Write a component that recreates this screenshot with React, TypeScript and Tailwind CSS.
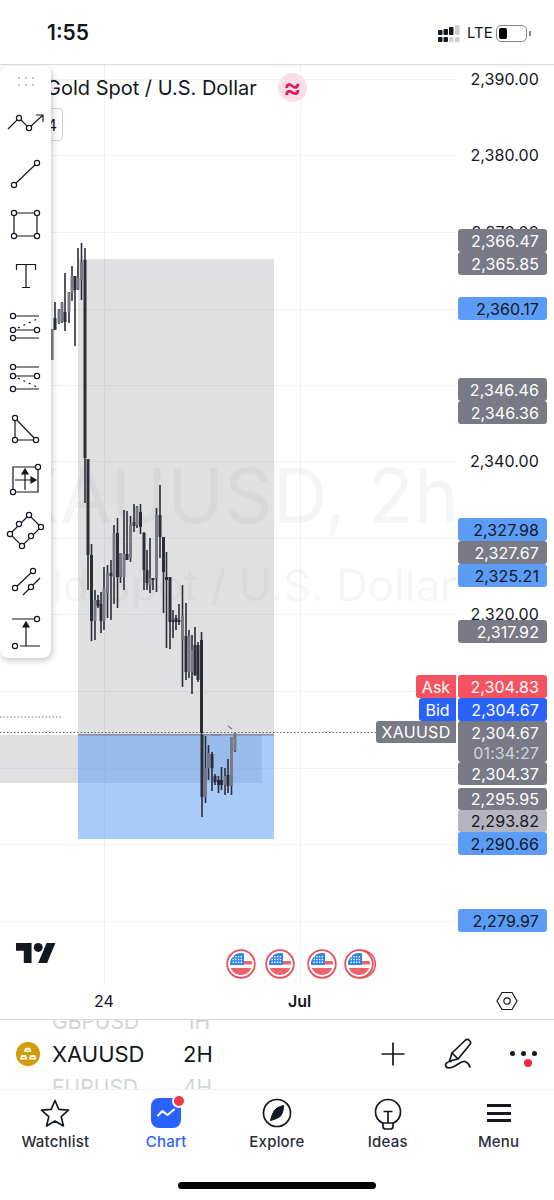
import React from "react";

const DARK = "#2a2e39";
const GRAY = "#787b86";

// x, wickTop, wickBottom, bodyTop, bodyBottom, colour
const candles: [number, number, number, number, number, string][] = [
  [52, 329, 360, 329, 360, GRAY], [55, 302, 330, 318, 330, DARK], [59, 309, 324, 310, 323, GRAY],
  [62, 302, 323, 303, 322, GRAY], [65, 273, 331, 312, 322, DARK], [69, 292, 323, 293, 312, GRAY],
  [72, 266, 301, 276, 293, GRAY], [75, 277, 346, 276, 290, DARK], [78, 248, 290, 278, 289, GRAY],
  [81.5, 243, 300, 262, 280, GRAY], [85, 248, 503, 260, 458, DARK], [88, 459, 590, 459, 555, DARK],
  [91.5, 544, 641, 555, 621, DARK], [95, 590, 640, 600, 621, GRAY], [98, 595, 608, 600, 606, DARK],
  [101, 592, 633, 604, 621, DARK], [104, 567, 630, 588, 621, GRAY], [107.5, 565, 618, 573, 593, GRAY],
  [111, 560, 620, 573, 576, DARK], [114, 525, 604, 533, 577, GRAY], [117.5, 518, 608, 533, 577, DARK],
  [120.5, 553, 583, 553, 577, GRAY], [124, 510, 590, 554, 577, GRAY], [127, 511, 558, 554, 560, DARK],
  [130.5, 516, 562, 525, 558, GRAY], [134, 504, 532, 522, 526, DARK], [137, 506, 528, 507, 525, GRAY],
  [140.5, 504, 534, 512, 527, DARK], [144, 532, 590, 533, 570, DARK], [147, 550, 590, 570, 583, DARK],
  [150, 538, 593, 578, 585, GRAY], [153, 578, 590, 578, 580, DARK], [156.5, 508, 592, 515, 578, GRAY],
  [160, 485, 558, 515, 537, DARK], [163.5, 537, 613, 537, 572, DARK], [166.5, 552, 648, 577, 580, DARK],
  [170, 577, 649, 577, 622, DARK], [173, 610, 638, 620, 622, DARK], [176, 615, 630, 618, 622, DARK],
  [179, 604, 625, 620, 622, DARK], [182.5, 585, 687, 616, 640, GRAY], [186, 603, 680, 636, 672, DARK],
  [189, 630, 678, 636, 672, GRAY], [192, 635, 694, 650, 672, GRAY], [195, 627, 676, 645, 675, DARK],
  [198, 642, 682, 645, 680, DARK], [201.5, 632, 735, 640, 733, DARK], [202, 735, 817, 735, 797, DARK],
  [205.5, 736, 803, 768, 797, GRAY], [208.5, 745, 780, 753, 768, GRAY], [212, 752, 791, 754, 768, DARK],
  [215, 774, 785, 776, 782, DARK], [218.5, 776, 793, 780, 785, DARK], [221.5, 767, 790, 780, 785, DARK],
  [225, 768, 795, 776, 785, GRAY], [228, 759, 793, 775, 786, DARK], [231.5, 742, 795, 737, 786, GRAY],
  [235, 733, 752, 733, 751, GRAY],
];

const gridY = [79, 155, 232, 309, 385, 461, 538, 614, 691, 768, 844, 921];

const axis: [string, number][] = [
  ["2,390.00", 79], ["2,380.00", 155], ["2,370.00", 232], ["2,340.00", 461], ["2,320.00", 614],
];

const labels: [string, number, number, string, string][] = [
  ["2,366.47", 229, 23, "bg-[#787b86]", "text-white"],
  ["2,365.85", 252, 23, "bg-[#787b86]", "text-white"],
  ["2,360.17", 297, 23, "bg-[#5b9cf6]", "text-[#131722]"],
  ["2,346.46", 378, 23, "bg-[#787b86]", "text-white"],
  ["2,346.36", 401, 23, "bg-[#787b86]", "text-white"],
  ["2,327.98", 518, 23, "bg-[#5b9cf6]", "text-[#131722]"],
  ["2,327.67", 541, 23, "bg-[#787b86]", "text-white"],
  ["2,325.21", 564, 23, "bg-[#5b9cf6]", "text-[#131722]"],
  ["2,317.92", 620, 23, "bg-[#787b86]", "text-white"],
  ["2,304.83", 675, 23, "bg-[#f7525f]", "text-white"],
  ["2,304.67", 698, 23, "bg-[#2962ff]", "text-white"],
  ["2,304.37", 762, 23, "bg-[#787b86]", "text-white"],
  ["2,295.95", 788, 22, "bg-[#787b86]", "text-white"],
  ["2,293.82", 810, 22, "bg-[#b2b5be]", "text-[#131722]"],
  ["2,290.66", 832, 23, "bg-[#5b9cf6]", "text-[#131722]"],
  ["2,279.97", 909, 23, "bg-[#5b9cf6]", "text-[#131722]"],
];

const I = "#131722";

function Node({ x, y, r = 2.6 }: { x: number; y: number; r?: number }) {
  return <circle cx={x} cy={y} r={r} fill="white" stroke={I} strokeWidth="1.2" />;
}

function Tool({ top, children }: { top: number; children: React.ReactNode }) {
  return (
    <svg width="51" height="51" viewBox={`0 ${top} 51 51`} fill="none" stroke={I} strokeWidth="1.2" className="block shrink-0">
      {children}
    </svg>
  );
}

function Toolbar() {
  return (
    <div className="absolute left-0 top-[1px] z-20 flex w-[51px] flex-col rounded-lg bg-white shadow-[1px_2px_6px_rgba(30,34,50,0.28)]">
      <div className="flex h-[31px] items-center justify-center">
        <div className="grid grid-cols-3 gap-x-[5px] gap-y-[5px]">
          {[0, 1, 2, 3, 4, 5].map((i) => (
            <span key={i} className="h-[2px] w-[2px] bg-[#c3c5cc]" />
          ))}
        </div>
      </div>
      <Tool top={97}>
        <path d="M8 129 19 118 29 128 43 115M36 115h7v7" />
        <Node x={19} y={118} />
        <Node x={29} y={128} />
      </Tool>
      <Tool top={148}>
        <path d="M14 185 37 163" />
        <Node x={14} y={185} />
        <Node x={37} y={163} />
      </Tool>
      <Tool top={199}>
        <path d="M14 213H37V236H14Z" />
        <Node x={14} y={213} />
        <Node x={37} y={213} />
        <Node x={14} y={236} />
        <Node x={37} y={236} />
      </Tool>
      <Tool top={250}>
        <path d="M16.5 270v-5.5h19v5.5M26 264.5V287M22 287.500h8" />
      </Tool>
      <Tool top={301}>
        <path d="M15.500 316H39M15.500 330H34.500M15.500 338H39" />
        <path d="M18 328 37 319" strokeDasharray="2 4" />
        <Node x={13} y={316} />
        <Node x={13} y={330} />
        <Node x={37} y={330} />
        <Node x={13} y={338} />
      </Tool>
      <Tool top={352}>
        <path d="M15.500 367H39M15.500 376H34.500M15.500 389H39" />
        <path d="M18 378 37 387" strokeDasharray="2 4" />
        <Node x={13} y={367} />
        <Node x={13} y={376} />
        <Node x={37} y={376} />
        <Node x={13} y={389} />
      </Tool>
      <Tool top={403}>
        <path d="M15 418V440H36Z" />
        <Node x={15} y={418} />
        <Node x={15} y={440} />
        <Node x={36} y={440} />
      </Tool>
      <Tool top={454}>
        <path d="M13 467H38V492H13Z" />
        <path d="M25 473V490M15 480H33" />
        <path d="M25 469l-3 5h6ZM36 480l-5-3v6Z" fill={I} />
        <Node x={38} y={467} />
        <Node x={13} y={492} />
      </Tool>
      <Tool top={505}>
        <path d="M10 534 29 515 41 527 22 546Z" />
        <Node x={10} y={534} />
        <Node x={19} y={524} />
        <Node x={29} y={515} />
        <Node x={41} y={527} />
        <Node x={31} y={536} />
        <Node x={22} y={546} />
      </Tool>
      <Tool top={556}>
        <path d="M15 588 33 571M23 595 40 578" />
        <Node x={15} y={588} />
        <Node x={33} y={571} />
        <Node x={31} y={587} />
      </Tool>
      <Tool top={607}>
        <path d="M12 619H37M20 646H40M26 646V626" />
        <path d="M26 622l-3 5h6Z" fill={I} />
        <Node x={37} y={619} />
        <Node x={15} y={646} />
      </Tool>
    </div>
  );
}

function Flag({ double }: { double?: boolean }) {
  return (
    <svg width="33" height="30" viewBox="0 0 33 30" className="block">
      {double && <circle cx="17.500" cy="15" r="13.800" fill="white" stroke="#e8505b" strokeWidth="1.600" />}
      <circle cx="15" cy="15" r="13.800" fill="white" stroke="#e8505b" strokeWidth="1.800" />
      <clipPath id={double ? "fd" : "fs"}>
        <circle cx="15" cy="15" r="11" />
      </clipPath>
      <g clipPath={`url(#${double ? "fd" : "fs"})`}>
        <rect x="4" y="12" width="22" height="3.500" fill="#f0626a" />
        <rect x="4" y="19" width="22" height="7" fill="#f0626a" />
        <rect x="4" y="4" width="14" height="12" fill="#2f86e6" />
        {[0, 1, 2].map((r) =>
          [0, 1, 2, 3].map((c) => (
            <rect key={`${r}${c}`} x={6.500 + c * 2.700} y={7 + r * 2.800} width="1.400" height="1.400" fill="white" />
          )),
        )}
      </g>
    </svg>
  );
}

function Chart() {
  return (
    <div className="relative h-[955px] w-full overflow-hidden border-b border-[#d9dae0] bg-white">
      <svg width="554" height="954" viewBox="0 65 554 954" className="absolute left-0 top-0">
        {gridY.map((y) => (
          <rect key={y} x="0" y={y} width="456" height="1" fill="#f0f1f4" />
        ))}
        <rect x="104" y="65" width="1" height="920" fill="#f0f1f4" />
        <rect x="300" y="65" width="1" height="920" fill="#f0f1f4" />
        <rect x="78" y="259" width="196" height="476" fill="#787b86" fillOpacity="0.23" />
        <rect x="0" y="735" width="262" height="48" fill="#787b86" fillOpacity="0.23" />
        <rect x="78" y="735" width="196" height="104" fill="#5b9cf6" fillOpacity="0.53" />
        <rect x="78" y="734" width="196" height="1.500" fill="#787b86" fillOpacity="0.8" />
      </svg>
      <div className="absolute left-[8px] top-[388px] whitespace-nowrap text-[76px] leading-[84px] text-[#787b86]/[0.08]">XAUUSD, 2h</div>
      <div className="absolute left-[-7px] top-[492px] whitespace-nowrap text-[44px] leading-[56px] text-[#787b86]/[0.08]">Gold Spot / U.S. Dollar</div>
      <svg width="554" height="954" viewBox="0 65 554 954" className="absolute left-0 top-0">
        {candles.map(([x, wt, wb, bt, bb, c], i) => (
          <g key={i}>
            <rect x={x - 0.800} y={wt} width="1.600" height={wb - wt} fill={DARK} />
            <rect x={x - 1.500} y={bt} width="3" height={bb - bt} fill={c} />
          </g>
        ))}
        <path d="M228 726l4 3M211 735h10M232 739l3-4" stroke={GRAY} strokeWidth="1.200" fill="none" />
        <path d="M0 717H62" stroke="#787b86" strokeWidth="1.200" strokeDasharray="1.500 2" />
        <path d="M0 732.500H376" stroke="#5d606b" strokeWidth="1.200" strokeDasharray="1.500 2" />
      </svg>
      <div className="absolute left-[46px] top-[8px] z-10 flex items-center">
        <span className="text-[20px] leading-[28px] text-[#131722]">Gold Spot / U.S. Dollar</span>
        <span className="ml-[21px] flex h-[29px] w-[29px] items-center justify-center rounded-full bg-[#fadfe8] text-[27px] font-semibold leading-none text-[#dd1a5a]">≈</span>
      </div>
      <div className="absolute left-[30px] top-[43px] z-10 flex h-[33px] w-[33px] items-center justify-end rounded border border-[#d1d4dc] bg-white pr-[5px] text-[16px] text-[#131722]">4</div>
      <Toolbar />
      {axis.map(([t, y]) => (
        <div key={t} className="absolute left-[458px] flex h-[22px] w-[89px] items-center justify-end pr-2 text-[16px] tracking-[0.1px] text-[#131722]" style={{ top: y - 65 - 11 }}>
          {t}
        </div>
      ))}
      {labels.map(([t, y, h, bg, fg]) => (
        <div key={t + y} className={`absolute left-[458px] flex w-[89px] items-center justify-end rounded-[3px] pr-2 text-[16px] tracking-[0.1px] ${bg} ${fg}`} style={{ top: y - 65, height: h }}>
          {t}
        </div>
      ))}
      <div className="absolute left-[458px] top-[656px] flex h-[41px] w-[89px] flex-col items-end rounded-[3px] bg-[#787b86] pr-2 pt-[2px] text-[16px] leading-[20px] tracking-[0.1px] text-white">
        <span>2,304.67</span>
        <span className="text-[#d1d4dc]">01:34:27</span>
      </div>
      <div className="absolute left-[416px] top-[610px] flex h-[23px] w-[40px] items-center justify-center rounded-l-[3px] bg-[#f7525f] text-[16px] text-white">Ask</div>
      <div className="absolute left-[419px] top-[633px] flex h-[23px] w-[37px] items-center justify-center rounded-l-[3px] bg-[#2962ff] text-[16px] text-white">Bid</div>
      <div className="absolute left-[376px] top-[656px] flex h-[22px] w-[80px] items-center justify-center rounded-l-[3px] bg-[#787b86] text-[16px] tracking-[0.3px] text-white">XAUUSD</div>
      <svg width="40" height="20" viewBox="0 4 36 18" className="absolute left-[16px] top-[878px]" fill="#131722">
        <path d="M14 22H7V11H0V4h14v18zM28 22h-8l7.500-18h8L28 22z" />
        <circle cx="20" cy="8" r="4" />
      </svg>
      <div className="absolute left-[226px] top-[884px]"><Flag /></div>
      <div className="absolute left-[265px] top-[884px]"><Flag /></div>
      <div className="absolute left-[307px] top-[884px]"><Flag /></div>
      <div className="absolute left-[344px] top-[884px]"><Flag double /></div>
      <div className="absolute left-[94px] top-[925px] text-[16px] leading-[22px] text-[#131722]">24</div>
      <div className="absolute left-[288px] top-[925px] text-[16px] font-semibold leading-[22px] text-[#131722]">Jul</div>
      <svg width="22" height="20" viewBox="0 0 22 20" className="absolute left-[496px] top-[926px]" fill="none" stroke="#131722" strokeWidth="1.200">
        <path d="M6 1.500H16L21 10 16 18.500H6L1 10Z" />
        <circle cx="11" cy="10" r="3.200" />
      </svg>
    </div>
  );
}

function SymbolBar() {
  return (
    <div className="relative flex h-[69px] items-center overflow-hidden bg-white pb-[2px] pl-[12px] pr-[20px]">
      <div className="absolute left-[52px] top-[-10px] flex text-[21px] leading-[24px] text-[#d1d4dc]">
        <span className="w-[134px]">GBPUSD</span>
        <span>1H</span>
      </div>
      <div className="absolute left-[52px] top-[56px] flex text-[21px] leading-[24px] text-[#d1d4dc]">
        <span className="w-[131px]">EURUSD</span>
        <span>4H</span>
      </div>
      <svg width="24" height="24" viewBox="0 0 24 24" className="ml-[4px] shrink-0">
        <circle cx="12" cy="12" r="12" fill="#d49a07" />
        <path d="M9.300 5.700h4.700l1.500 4.400H7.700ZM5.300 13h4.700l1.500 4.400H3.700ZM14.300 13h4.700l1.500 4.400h-7.800Z" fill="white" />
        <path d="M10.200 7.800h2.800v.9h-2.800ZM6.200 15.100H9v.9H6.200ZM15.200 15.100H18v.9h-2.800Z" fill="#d49a07" />
      </svg>
      <span className="ml-[12px] w-[131px] text-[22px] leading-[28px] text-[#131722]">XAUUSD</span>
      <span className="text-[22px] leading-[28px] text-[#131722]">2H</span>
      <div className="flex-1" />
      <svg width="26" height="26" viewBox="0 0 26 26" className="absolute left-[380px] top-[21px]" stroke="#131722" strokeWidth="1.700" fill="none">
        <path d="M13 1.500V24.500M1.500 13H24.500" />
      </svg>
      <svg width="30" height="32" viewBox="0 0 30 32" className="absolute left-[443px] top-[18px]" stroke="#131722" strokeWidth="1.700" fill="none" strokeLinejoin="round" strokeLinecap="round">
        <path d="M22 2.500c1.500-1.500 3-1.500 4.500 0s1.500 3 0 4.500L15 21l-6-6Z" />
        <path d="M9 15 6.500 23 15 21" />
        <path d="M8 23.500C4 23.500 1.500 26 3 28.500S8 30 12 28s7-5.500 10-4.500 4 3 5 5.500" />
      </svg>
      <div className="absolute left-[510px] top-[31px] flex gap-[6px]">
        <span className="h-[5px] w-[5px] rounded-full bg-[#131722]" />
        <span className="h-[5px] w-[5px] rounded-full bg-[#131722]" />
        <span className="h-[5px] w-[5px] rounded-full bg-[#131722]" />
      </div>
      <span className="absolute left-[524px] top-[39px] h-[8px] w-[8px] rounded-full bg-[#f7254f]" />
    </div>
  );
}

function TabBar() {
  const tab = "flex flex-col items-center";
  const label = "mt-[4px] text-[15px] font-medium leading-[20px] tracking-[0.2px] text-[#2a2e39]";
  return (
    <div className="relative h-[111px] border-t border-[#eeeff2] bg-white">
      <div className="grid grid-cols-5 px-0 pt-[8px]">
        <div className={tab}>
          <svg width="30" height="30" viewBox="0 0 30 30" fill="none" stroke="#131722" strokeWidth="1.700" strokeLinejoin="round">
            <path d="M15 2.500 18.800 11.300 28.500 12.200 21.200 18.600 23.400 28 15 23 6.600 28 8.800 18.600 1.500 12.200 11.200 11.300Z" />
          </svg>
          <span className={label}>Watchlist</span>
        </div>
        <div className={tab}>
          <div className="relative h-[30px] w-[30px] rounded-lg bg-[#2962ff]">
            <svg width="30" height="30" viewBox="0 0 30 30" fill="none" stroke="white" strokeWidth="2" strokeLinejoin="round" strokeLinecap="round">
              <path d="M7 17.500 11.500 13 16.500 17 23 11.500" />
            </svg>
            <span className="absolute right-[-3px] top-[-2px] h-[10px] w-[10px] rounded-full bg-[#f23645] ring-2 ring-white" />
          </div>
          <span className="mt-[4px] text-[15px] font-medium leading-[20px] tracking-[0.2px] text-[#2962ff]">Chart</span>
        </div>
        <div className={tab}>
          <svg width="30" height="30" viewBox="0 0 30 30" fill="none" stroke="#131722" strokeWidth="1.700">
            <circle cx="15" cy="15" r="13.500" />
            <path d="M21.500 7.500C21.500 13 20 17 17.500 19L12 21.500 8.500 22.500 9.500 18.500 12 13C14 10 17.500 8.500 21.500 7.500Z" fill="#131722" strokeWidth="1" strokeLinejoin="round" />
          </svg>
          <span className={label}>Explore</span>
        </div>
        <div className={tab}>
          <svg width="28" height="32" viewBox="0 0 28 32" fill="none" stroke="#131722" strokeWidth="1.700">
            <path d="M8.500 25C4.500 23 1.500 19 1.500 14 1.500 7 7 1.500 14 1.500S26.500 7 26.500 14c0 5-3 9-7 11Z" />
            <path d="M9.500 13.500h9M14 13.500V25" />
            <path d="M9 25v3.500c0 1.500 1 2.500 2.500 2.500h5c1.500 0 2.500-1 2.500-2.500V25" />
          </svg>
          <span className="mt-[2px] text-[15px] font-medium leading-[20px] tracking-[0.2px] text-[#2a2e39]">Ideas</span>
        </div>
        <div className={tab}>
          <div className="flex h-[30px] w-[24px] flex-col justify-between py-[6px]">
            <span className="h-[3px] bg-[#131722]" />
            <span className="h-[3px] bg-[#131722]" />
            <span className="h-[3px] bg-[#131722]" />
          </div>
          <span className={label}>Menu</span>
        </div>
      </div>
      <div className="absolute left-[178px] top-[92px] h-[7px] w-[198px] rounded-full bg-black" />
    </div>
  );
}

function StatusBar() {
  return (
    <div className="relative flex h-[65px] items-start border-b border-[#d9dae0] bg-white pl-[47px] pt-[20px]">
      <span className="text-[21px] font-semibold leading-[26px] text-[#131722]">1:55</span>
      <svg width="22" height="18" viewBox="0 0 22 18" className="absolute left-[438px] top-[25px]" fill="#131722">
        <rect x="0" y="5" width="4.500" height="5" rx="1" />
        <rect x="5.500" y="4" width="4.500" height="6" rx="1" />
        <rect x="11" y="2" width="4.500" height="8" rx="1" />
        <rect x="17" y="0" width="4.500" height="10" rx="1" fill="#cfcfd2" />
        <rect x="0" y="12" width="4.500" height="5" rx="1" />
        <rect x="5.500" y="12" width="4.500" height="5" rx="1" />
        <rect x="11" y="12" width="4.500" height="5" rx="1" fill="#cfcfd2" />
        <rect x="17" y="12" width="4.500" height="5" rx="1" fill="#cfcfd2" />
      </svg>
      <span className="absolute left-[467px] top-[23px] text-[15px] leading-[20px] text-[#131722]">LTE</span>
      <div className="absolute left-[496px] top-[25px] flex h-[17px] w-[31px] items-center rounded-[5px] border border-[#85858a] px-[2px]">
        <span className="h-[11px] w-[8px] rounded-[2px] bg-black" />
      </div>
      <span className="absolute left-[529px] top-[31px] h-[5px] w-[1.500px] bg-[#85858a]" />
    </div>
  );
}

export default function App() {
  return (
    <div className="flex h-[1200px] w-[554px] flex-col overflow-hidden bg-white font-['Inter',sans-serif]">
      <StatusBar />
      <Chart />
      <SymbolBar />
      <TabBar />
    </div>
  );
}
